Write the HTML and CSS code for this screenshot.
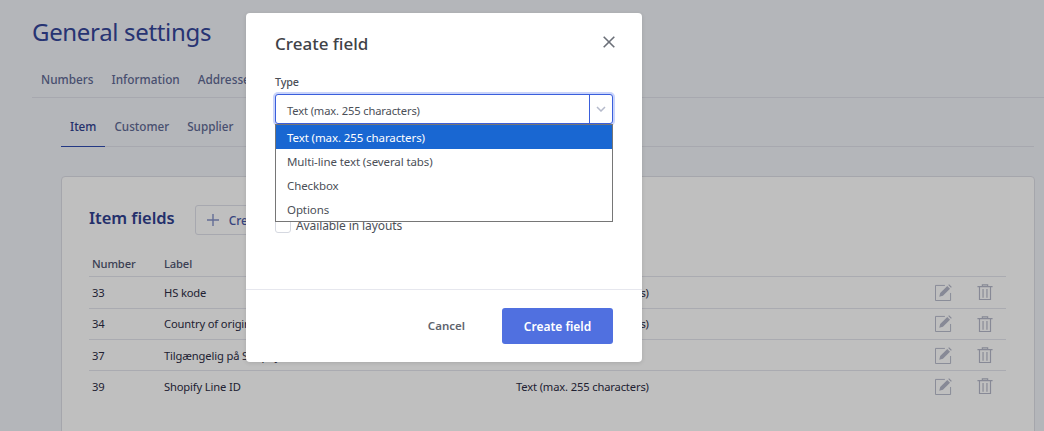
FILE: index.html
```html
<!DOCTYPE html>
<html lang="en">
<head>
<meta charset="utf-8">
<title>General settings</title>
<link rel="stylesheet" href="styles.css">
</head>
<body>
<main class="page">
  <h1 class="page-title">General settings</h1>
  <nav class="tabs">
    <a>Numbers</a><a>Information</a><a>Addresses</a>
  </nav>
  <nav class="subtabs">
    <a class="active">Item</a><a>Customer</a><a>Supplier</a>
  </nav>
  <section class="card">
    <div class="card-head">
      <h2>Item fields</h2>
      <button class="add-btn"><svg class="plus" width="12" height="12" viewBox="0 0 12 12"><path d="M6 0v12M0 6h12" stroke="currentColor" stroke-width="1.4"/></svg>Create field</button>
    </div>
    <div class="grid">
      <div class="row head"><span>Number</span><span>Label</span><span>Type</span></div>
      <div class="row"><span>33</span><span>HS kode</span><span>Text (max. 255 characters)</span>
        <svg class="ico" viewBox="0 0 18 18"><use href="#edit"/></svg><svg class="ico trash" viewBox="0 0 18 18"><use href="#trash"/></svg></div>
      <div class="row"><span>34</span><span>Country of origin</span><span>Text (max. 255 characters)</span>
        <svg class="ico" viewBox="0 0 18 18"><use href="#edit"/></svg><svg class="ico trash" viewBox="0 0 18 18"><use href="#trash"/></svg></div>
      <div class="row"><span>37</span><span>Tilgængelig på Shopify</span><span>Checkbox</span>
        <svg class="ico" viewBox="0 0 18 18"><use href="#edit"/></svg><svg class="ico trash" viewBox="0 0 18 18"><use href="#trash"/></svg></div>
      <div class="row"><span>39</span><span>Shopify Line ID</span><span>Text (max. 255 characters)</span>
        <svg class="ico" viewBox="0 0 18 18"><use href="#edit"/></svg><svg class="ico trash" viewBox="0 0 18 18"><use href="#trash"/></svg></div>
    </div>
  </section>
</main>

<svg class="defs" width="0" height="0">
  <symbol id="edit" viewBox="0 0 18 18">
    <path d="M10.500 1.500H.5v16h16V9.500" fill="none" stroke="currentColor" stroke-width="1"/>
    <path d="M4.500 13.500l1-3.900L13 2.100l2.900 2.900-7.500 7.500z" fill="currentColor"/>
    <path d="M14 1.100l.9-.9 2.900 2.900-.9.9z" fill="currentColor"/>
  </symbol>
  <symbol id="trash" viewBox="0 0 18 18">
    <path d="M.5 3h17M6 3V1h6v2M2.800 3v14.500h12.400V3M6.800 5.500v10M11.200 5.500v10" fill="none" stroke="currentColor" stroke-width="1.300"/>
  </symbol>
</svg>

<div class="overlay">
  <div class="modal">
    <header class="modal-head">
      <h3>Create field</h3>
      <svg class="close" width="12" height="12" viewBox="0 0 12 12"><path d="M.7.7l10.600 10.600M11.300.7L.7 11.300" stroke="currentColor" stroke-width="1.600"/></svg>
    </header>
    <div class="modal-body">
      <label class="label">Type</label>
      <div class="select-wrap">
        <div class="select">
          <span class="select-value">Text (max. 255 characters)</span>
          <span class="select-arrow"><svg width="10" height="6" viewBox="0 0 10 6"><path d="M1 1l4 4 4-4" fill="none" stroke="currentColor" stroke-width="1.500"/></svg></span>
        </div>
        <ul class="dropdown">
          <li class="selected">Text (max. 255 characters)</li>
          <li>Multi-line text (several tabs)</li>
          <li>Checkbox</li>
          <li>Options</li>
        </ul>
      </div>
      <div class="check-row"><span class="checkbox"></span><span class="check-text">Available in layouts</span></div>
    </div>
    <footer class="modal-foot">
      <button class="btn-cancel">Cancel</button>
      <button class="btn-primary">Create field</button>
    </footer>
  </div>
</div>
</body>
</html>
```
FILE: styles.css
```css
* { box-sizing: border-box; }
html, body { margin: 0; height: 100%; overflow: hidden; }
body {
  background: #f1f3f9;
  font-family: "Noto Sans", "Open Sans", sans-serif;
  font-size: 11.200px;
  letter-spacing: -.15px;
  color: #2c2c44;
}
.page { padding: 14px 0 0 32px; height: 431px; overflow: hidden; }
.page-title {
  margin: 0;
  font-size: 24px;
  letter-spacing: -.33px;
  line-height: 36px;
  font-weight: 400;
  color: #34469a;
}
.tabs {
  display: flex;
  gap: 18px;
  height: 48px;
  padding: 16px 0 0 9px;
  border-bottom: 1px solid #dfe1ea;
  font-size: 11.800px;
  letter-spacing: 0;
  font-weight: 500;
  color: #5f6a94;
  line-height: 26px;
}
.subtabs {
  display: flex;
  width: 973px;
  height: 49px;
  margin-left: 29px;
  border-bottom: 1px solid #dfe1ea;
  font-size: 11.700px;
  letter-spacing: 0;
  font-weight: 500;
  color: #5f6a94;
}
.subtabs a { padding: 0 9px; line-height: 57px; height: 49px; }
.subtabs a.active { color: #2f408f; border-bottom: 1px solid #2f4bb0; }
.card {
  margin: 29px 0 0 29px;
  width: 974px;
  height: 300px;
  padding: 28px 28px 0 27px;
  background: #fff;
  border: 1px solid #dcdee6;
  border-radius: 4px;
}
.card-head { display: flex; align-items: center; gap: 20px; height: 30px; }
.card-head h2 { margin: 0 0 6px; font-size: 16.500px; letter-spacing: -.05px; font-weight: 600; color: #2f408f; }
.add-btn {
  display: flex;
  align-items: center;
  gap: 10px;
  height: 30px;
  padding: 0 14px 0 11px;
  background: #fff;
  border: 1px solid #dfe1ea;
  border-radius: 3px;
  font: 500 12px "Noto Sans", sans-serif;
  color: #4a5aa8;
}
.plus { color: #8592c8; }
.grid { margin-top: 15px; }
.row {
  display: grid;
  grid-template-columns: 72px 352px 419px 42px 1fr;
  align-items: center;
  height: 31.330px;
  padding: 0 0 0 3px;
  border-top: 1px solid #e3e4ec;
}
.row.head {
  height: 26.300px;
  border-top: 0;
  font-weight: 500;
  color: #4f5570;
}
.ico { width: 17px; height: 17px; color: #b4b7c8; }
.trash { width: 16px; height: 16px; }
.defs { position: absolute; }
.overlay {
  position: absolute;
  inset: 0;
  background: rgba(0, 0, 0, .25);
}
.modal {
  position: absolute;
  left: 246px;
  top: 13px;
  width: 396px;
  height: 349px;
  display: flex;
  flex-direction: column;
  background: #fff;
  border-radius: 4px;
  box-shadow: 0 1px 4px rgba(0, 0, 0, .12);
}
.modal-head {
  display: flex;
  justify-content: space-between;
  align-items: center;
  height: 54px;
  padding: 6px 27px 2px 29px;
  color: #6b6f78;
}
.modal-head h3 { margin: 0 0 -2px; font-size: 17px; letter-spacing: 0; font-weight: 500; color: #3f4247; }
.modal-body { flex: 1; padding: 7px 29px 0; color: #4b4f57; }
.label { display: block; font-size: 10.800px; line-height: 15px; font-weight: 500; color: #4b4f57; margin-bottom: 5px; }
.select-wrap { position: relative; }
.select {
  display: flex;
  height: 30px;
  background: #fff;
  border: 1px solid #3a5fdc;
  border-radius: 3px;
  box-shadow: 0 0 0 2px #c9d4fb;
}
.select-value { flex: 1; padding: 2px 0 0 11px; line-height: 28px; color: #4b4f57; }
.select-arrow {
  width: 23px;
  border-left: 1px solid #3a5fdc;
  display: flex;
  align-items: center;
  justify-content: center;
  color: #b5bacb;
}
.dropdown {
  position: absolute;
  left: 0;
  right: 0;
  top: 30px;
  margin: 0;
  padding: 0;
  list-style: none;
  background: #fff;
  border: 1px solid #767676;
  color: #4b4f57;
  font-size: 11.500px;
  letter-spacing: -.1px;
}
.dropdown li { height: 24px; line-height: 25px; padding-left: 11px; }
.dropdown li.selected { background: #1967d2; color: #fff; }
.check-row {
  display: flex;
  align-items: center;
  gap: 5px;
  margin-top: 93px;
  height: 16px;
}
.check-text { font-size: 12px; letter-spacing: -.1px; }
.checkbox { width: 16px; height: 16px; background: #fff; border: 1px solid #d5d8e0; border-radius: 3px; }
.modal-foot {
  display: flex;
  justify-content: flex-end;
  align-items: center;
  gap: 37px;
  height: 73px;
  padding: 0 29px 0 0;
  border-top: 1px solid #e6e7ee;
}
.btn-cancel { padding: 0 0 1px; border: 0; background: none; font: 600 11.500px "Noto Sans", sans-serif; color: #60646e; }
.btn-primary {
  width: 111px;
  height: 36px;
  border: 0;
  border-radius: 3px;
  background: #5070e0;
  color: #fff;
  font: 600 12px "Noto Sans", sans-serif;
}
```
